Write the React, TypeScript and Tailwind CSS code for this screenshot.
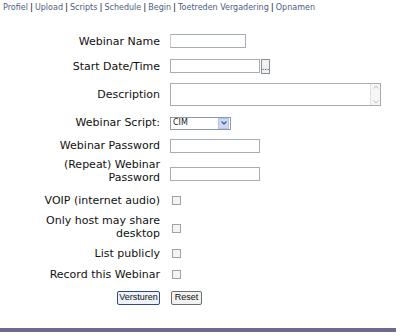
import React from "react"

const NAV = ["Profiel", "Upload", "Scripts", "Schedule", "Begin", "Toetreden Vergadering", "Opnamen"]

function TextBox({ w }: { w: string }) {
  return <div className={`${w} h-[14px] border border-[#a5acb5] bg-white`} />
}

function Check() {
  return <div className="w-[9px] h-[9px] border border-[#9ca3ac] bg-[#f4f4f2] ml-[2px]" />
}

function Row({ h, label, children }: { h: string; label: React.ReactNode; children?: React.ReactNode }) {
  return (
    <div className={`flex items-center ${h}`}>
      <div className="w-[120px] text-right leading-[13px] text-[#111]">{label}</div>
      <div className="ml-[10px] flex items-center">{children}</div>
    </div>
  )
}

export default function App() {
  return (
    <div className="w-[403px] h-[336px] bg-white relative overflow-hidden font-['DejaVu_Sans',Verdana,sans-serif]">
      {/* Top menu */}
      <div className="flex items-center pl-[3px] pt-[2px] h-[13px] text-[8px] text-[#4b5e80]">
        {NAV.map((n, i) => (
          <React.Fragment key={n}>
            <span>{n}</span>
            {i < NAV.length - 1 && <span className="mx-[2px] text-[#222] text-[9px] leading-none">|</span>}
          </React.Fragment>
        ))}
      </div>

      {/* Form */}
      <div className="pl-[40px] pt-[16px] text-[11px]">
        <Row h="h-[24px]" label="Webinar Name">
          <div className="w-[76px] h-[14px] border border-[#a5acb5] border-l-[#c8ccd0] bg-white" />
        </Row>
        <Row h="h-[26px]" label="Start Date/Time">
          <TextBox w="w-[90px]" />
          <div className="ml-[1px] w-[9px] h-[15px] border border-[#8a8f96] bg-[#f0f0f0] flex items-end justify-center text-[8px] leading-[10px] text-[#222]">...</div>
        </Row>
        <Row h="h-[30px]" label="Description">
          <div className="w-[211px] h-[23px] border border-[#a5acb5] bg-white flex justify-end">
            <div className="w-[10px] h-full bg-[#f6f6f4] border-l border-[#e2e2e0] flex flex-col justify-between items-center py-[1px]">
              <svg width="6" height="4" viewBox="0 0 6 4"><path d="M0.5 3.5 L3 1 L5.5 3.5" stroke="#b8bcc4" fill="none" /></svg>
              <svg width="6" height="4" viewBox="0 0 6 4"><path d="M0.5 0.5 L3 3 L5.5 0.5" stroke="#b8bcc4" fill="none" /></svg>
            </div>
          </div>
        </Row>
        <Row h="h-[27px]" label="Webinar Script:">
          <div className="mt-[1px] w-[61px] h-[13px] border border-[#8e99a8] bg-white flex items-center justify-between">
            <span className="text-[8px] pl-[2px] leading-none text-[#222]">CIM</span>
            <div className="w-[11px] h-[11px] mr-[1px] bg-[#c9d8f4] border border-[#b3c6ea] flex items-center justify-center">
              <svg width="6" height="4" viewBox="0 0 6 4"><path d="M0.5 0.5 L3 3 L5.5 0.5" stroke="#4d6185" strokeWidth="1.3" fill="none" /></svg>
            </div>
          </div>
        </Row>
        <Row h="h-[18px]" label="Webinar Password">
          <div className="mt-[2px]"><TextBox w="w-[90px]" /></div>
        </Row>
        <Row h="h-[34px]" label={<>(Repeat) Webinar<br />Password</>}>
          <div className="mt-[5px]"><TextBox w="w-[90px]" /></div>
        </Row>
        <Row h="h-[25px]" label="VOIP (internet audio)">
          <Check />
        </Row>
        <Row h="h-[28px]" label={<>Only host may share<br />desktop</>}>
          <div className="mt-[2px]"><Check /></div>
        </Row>
        <Row h="h-[25px]" label="List publicly">
          <Check />
        </Row>
        <Row h="h-[17px]" label="Record this Webinar">
          <Check />
        </Row>
        <div className="flex items-center h-[29px] font-['Liberation_Sans',Arial,sans-serif]">
          <div className="w-[120px] flex justify-end">
            <button className="w-[43px] h-[14px] border border-[#304a7c] rounded-[2px] bg-[#eef2fa] text-[9px] leading-none text-[#111]">Versturen</button>
          </div>
          <button className="ml-[11px] w-[31px] h-[14px] border border-[#6d6d6d] rounded-[2px] bg-[#f2f2f0] text-[9px] leading-none text-[#111]">Reset</button>
        </div>
      </div>

      {/* Bottom rule */}
      <div className="absolute left-0 top-[328px] w-[396px] h-[4px] bg-[#6e6a8e]" />
    </div>
  )
}
